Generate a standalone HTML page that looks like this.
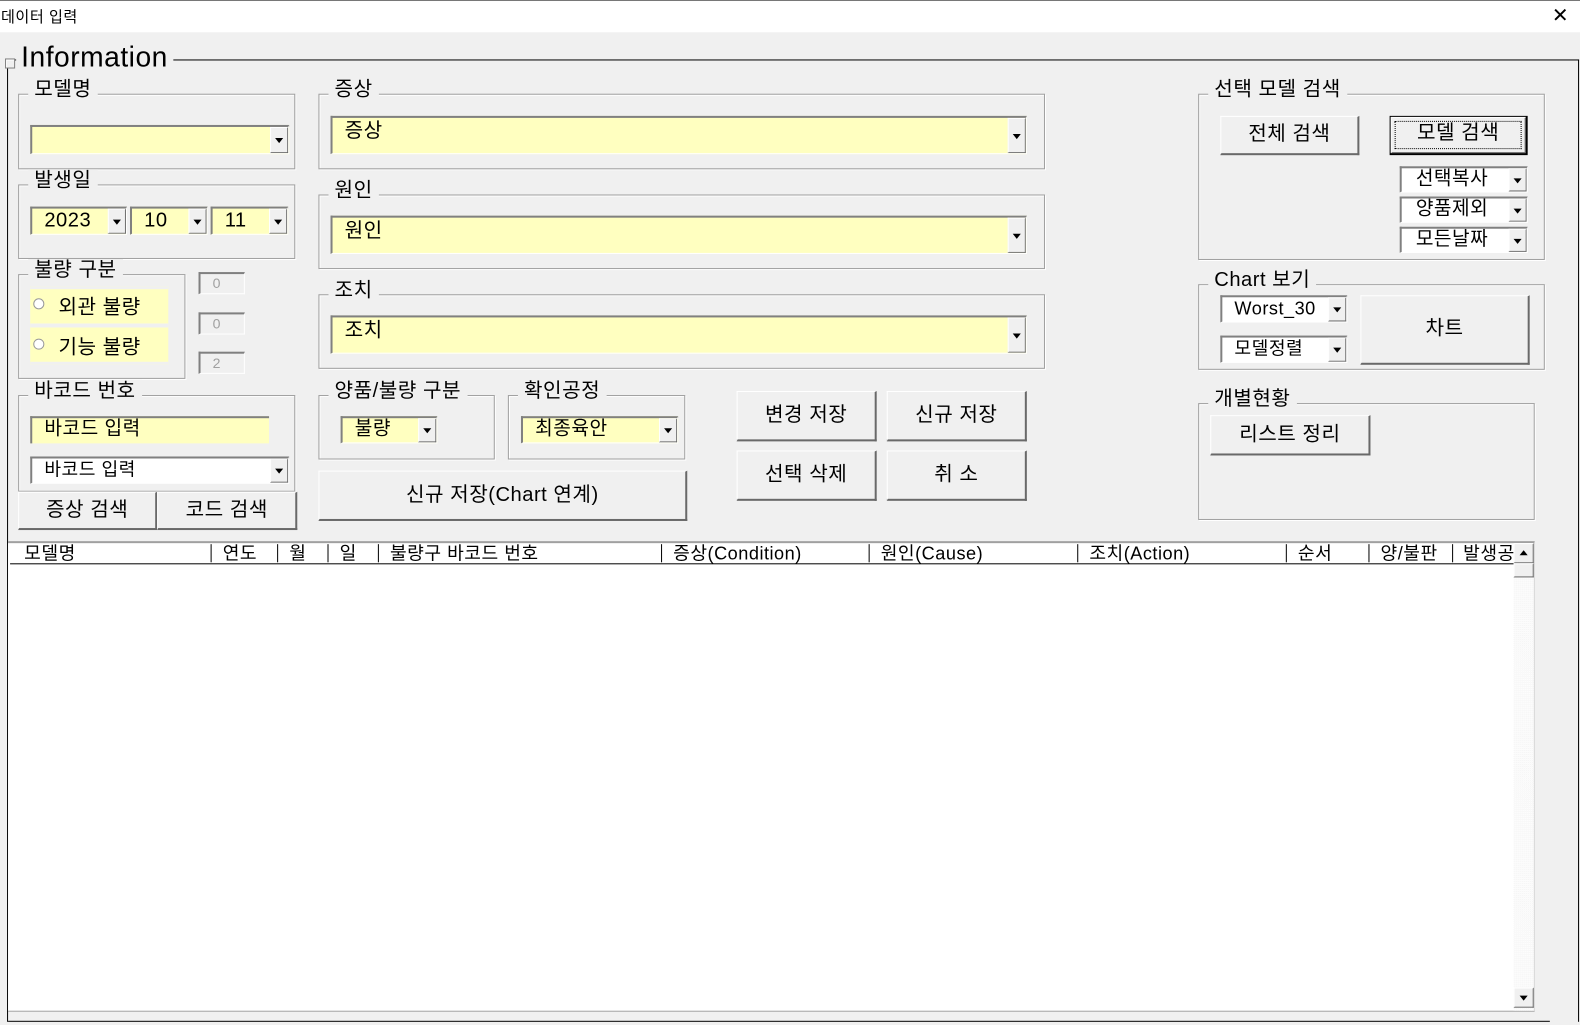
<!DOCTYPE html>
<html><head><meta charset="utf-8">
<style>
*{box-sizing:border-box;margin:0;padding:0}
html,body{width:1580px;height:1025px;overflow:hidden;background:#f0f0f0}
#wrap{width:1568px;height:1018px;background:#f0f0f0;position:relative;transform:scale(1.0077);transform-origin:0 0;font-family:"Liberation Sans","Noto Sans CJK KR",sans-serif;color:#000;letter-spacing:0.5px}
.a{position:absolute}
.title{left:0;top:0;width:1568px;height:32px;background:#fff;border-top:1px solid #777;font-size:15px;padding:5px 0 0 1px}
.fr{position:absolute;border:1px solid #a0a0a0;box-shadow:1px 1px 0 #fff inset,1px 1px 0 #fff}
.lg{position:absolute;background:#f0f0f0;font-size:20px;line-height:22px;padding:0 6px;white-space:nowrap}
.cb{position:absolute;border-top:2px solid #808080;border-left:2px solid #808080;border-right:1px solid #fff;border-bottom:1px solid #fff;background:#ffffc0;font-size:19px;padding-left:12px;white-space:nowrap;overflow:hidden}
.cb.w{background:#fff}
.cb .dd{position:absolute;right:0;top:0;bottom:0;width:18px;background:#f0f0f0;border-top:1px solid #fff;border-left:1px solid #fff;border-right:1px solid #696969;border-bottom:1px solid #696969}
.cb .dd:after{content:"";position:absolute;left:4px;top:50%;margin-top:-2px;border-left:4px solid transparent;border-right:4px solid transparent;border-top:5px solid #000}
.bt{position:absolute;background:#f0f0f0;border-top:1px solid #fff;border-left:1px solid #fff;border-right:2px solid #696969;border-bottom:2px solid #696969;font-size:20px;text-align:center;white-space:nowrap}
.tb{position:absolute;width:46px;height:22px;border-top:2px solid #808080;border-left:2px solid #808080;border-right:1px solid #fff;border-bottom:1px solid #fff;font-size:14px;color:#a0a0a0;padding-left:12px;line-height:18px}
.hd{position:absolute;top:538px;font-size:18px;line-height:22px;color:#000;white-space:nowrap}
.sep{position:absolute;top:540px;width:1px;height:18px;background:#000}
</style></head><body><div id="wrap">
<div class="a title">데이터 입력</div>
<div class="a" style="left:1540px;top:6px;font-size:20px;line-height:20px;font-weight:300">✕</div>

<div class="a" style="left:7px;top:59px;width:1560px;height:955px;border:1px solid #000;border-bottom:none"></div>
<div class="a" style="left:8px;top:1013px;width:1530px;height:1px;background:#000"></div>
<div class="a" style="left:5px;top:58px;width:10px;height:10px;border:1px solid #808080;background:#f0f0f0;box-shadow:1px 1px 0 #fff inset"></div>
<div class="lg" style="left:16px;top:42px;font-size:28px;line-height:30px;padding:0 5px">Information</div>

<div class="fr" style="left:18px;top:93px;width:275px;height:75px"></div>
<div class="lg" style="left:28px;top:78px">모델명</div>
<div class="cb" style="left:30px;top:124px;width:257px;height:29px"><span class="dd"></span></div>

<div class="fr" style="left:18px;top:183px;width:275px;height:74px"></div>
<div class="lg" style="left:28px;top:168px">발생일</div>
<div class="cb" style="left:30px;top:205px;width:96px;height:28px;line-height:24px;font-size:20px">2023<span class="dd"></span></div>
<div class="cb" style="left:129px;top:205px;width:77px;height:28px;line-height:24px;font-size:20px">10<span class="dd"></span></div>
<div class="cb" style="left:209px;top:205px;width:77px;height:28px;line-height:24px;font-size:20px">11<span class="dd"></span></div>

<div class="fr" style="left:18px;top:272px;width:166px;height:104px"></div>
<div class="lg" style="left:28px;top:257px">불량 구분</div>
<div class="a" style="left:30px;top:284px;width:137px;height:78px;background:#ffffc0;border-top:3px solid #f0f0f0;border-bottom:3px solid #f0f0f0"></div>
<div class="a" style="left:30px;top:321px;width:137px;height:4px;background:#f0f0f0"></div>
<div class="a" style="left:33px;top:296px;width:11px;height:11px;border-radius:50%;background:#fff;border:1px solid #999"></div>
<div class="a" style="left:33px;top:336px;width:11px;height:11px;border-radius:50%;background:#fff;border:1px solid #999"></div>
<div class="a" style="left:58px;top:288px;font-size:20px">외관 불량</div>
<div class="a" style="left:58px;top:328px;font-size:20px">기능 불량</div>
<div class="tb" style="left:197px;top:270px">0</div>
<div class="tb" style="left:197px;top:310px">0</div>
<div class="tb" style="left:197px;top:349px">2</div>

<div class="fr" style="left:18px;top:392px;width:275px;height:96px"></div>
<div class="lg" style="left:28px;top:377px">바코드 번호</div>
<div class="cb" style="left:30px;top:413px;width:237px;height:27px;line-height:22px;border-right:none;border-bottom:none">바코드 입력</div>
<div class="cb w" style="left:30px;top:453px;width:257px;height:27px;line-height:22px;font-size:18px">바코드 입력<span class="dd"></span></div>
<div class="bt" style="left:18px;top:488px;width:138px;height:38px;line-height:34px">증상 검색</div>
<div class="bt" style="left:156px;top:488px;width:139px;height:38px;line-height:34px">코드 검색</div>

<div class="fr" style="left:316px;top:93px;width:721px;height:75px"></div>
<div class="lg" style="left:326px;top:78px">증상</div>
<div class="cb" style="left:328px;top:115px;width:691px;height:38px;line-height:26px;font-size:20px">증상<span class="dd"></span></div>
<div class="fr" style="left:316px;top:193px;width:721px;height:74px"></div>
<div class="lg" style="left:326px;top:178px">원인</div>
<div class="cb" style="left:328px;top:214px;width:691px;height:38px;line-height:26px;font-size:20px">원인<span class="dd"></span></div>
<div class="fr" style="left:316px;top:292px;width:721px;height:74px"></div>
<div class="lg" style="left:326px;top:277px">조치</div>
<div class="cb" style="left:328px;top:313px;width:691px;height:38px;line-height:26px;font-size:20px">조치<span class="dd"></span></div>

<div class="fr" style="left:316px;top:392px;width:175px;height:64px"></div>
<div class="lg" style="left:326px;top:377px">양품/불량 구분</div>
<div class="cb" style="left:338px;top:413px;width:96px;height:27px;line-height:22px">불량<span class="dd"></span></div>
<div class="fr" style="left:504px;top:392px;width:176px;height:64px"></div>
<div class="lg" style="left:514px;top:377px">확인공정</div>
<div class="cb" style="left:517px;top:413px;width:156px;height:27px;line-height:22px">최종육안<span class="dd"></span></div>
<div class="bt" style="left:316px;top:467px;width:366px;height:50px;line-height:46px">신규 저장(Chart 연계)</div>

<div class="bt" style="left:731px;top:388px;width:139px;height:50px;line-height:46px">변경 저장</div>
<div class="bt" style="left:880px;top:388px;width:139px;height:50px;line-height:46px">신규 저장</div>
<div class="bt" style="left:731px;top:447px;width:139px;height:50px;line-height:46px">선택 삭제</div>
<div class="bt" style="left:880px;top:447px;width:139px;height:50px;line-height:46px">취 소</div>

<div class="fr" style="left:1189px;top:93px;width:344px;height:165px"></div>
<div class="lg" style="left:1199px;top:78px">선택 모델 검색</div>
<div class="bt" style="left:1211px;top:115px;width:138px;height:39px;line-height:35px">전체 검색</div>
<div class="bt" style="left:1379px;top:115px;width:137px;height:39px;line-height:33px;border:1px solid #000;border-right:2px solid #000;border-bottom:2px solid #000;box-shadow:inset 1px 1px 0 #fff,inset -1px -1px 0 #696969"><div style="position:absolute;left:4px;top:4px;right:4px;bottom:4px;border:1px dotted #000"></div>모델 검색</div>
<div class="cb w" style="left:1389px;top:165px;width:127px;height:26px;line-height:21px;font-size:19px;padding-left:14px">선택복사<span class="dd"></span></div>
<div class="cb w" style="left:1389px;top:195px;width:127px;height:26px;line-height:21px;font-size:19px;padding-left:14px">양품제외<span class="dd"></span></div>
<div class="cb w" style="left:1389px;top:225px;width:127px;height:26px;line-height:21px;font-size:19px;padding-left:14px">모든날짜<span class="dd"></span></div>

<div class="fr" style="left:1189px;top:282px;width:344px;height:85px"></div>
<div class="lg" style="left:1199px;top:267px">Chart 보기</div>
<div class="cb w" style="left:1211px;top:293px;width:126px;height:27px;line-height:22px;font-size:18px">Worst_30<span class="dd"></span></div>
<div class="cb w" style="left:1211px;top:333px;width:126px;height:27px;line-height:22px;font-size:18px">모델정렬<span class="dd"></span></div>
<div class="bt" style="left:1350px;top:293px;width:168px;height:69px;line-height:64px">차트</div>

<div class="fr" style="left:1189px;top:400px;width:334px;height:116px"></div>
<div class="lg" style="left:1199px;top:385px">개별현황</div>
<div class="bt" style="left:1201px;top:412px;width:159px;height:40px;line-height:36px">리스트 정리</div>

<div class="a" style="left:8px;top:537px;width:1515px;height:467px;background:#fff;border-top:2px solid #a0a0a0;border-bottom:1px solid #a0a0a0;border-right:1px solid #d0d0d0"></div>
<div class="a" style="left:10px;top:559px;width:1492px;height:1px;background:#000"></div>
<div class="hd" style="left:24px">모델명</div>
<div class="sep" style="left:209px"></div><div class="hd" style="left:221px">연도</div>
<div class="sep" style="left:275px"></div><div class="hd" style="left:287px">월</div>
<div class="sep" style="left:325px"></div><div class="hd" style="left:337px">일</div>
<div class="sep" style="left:375px"></div><div class="hd" style="left:387px">불량구 바코드 번호</div>
<div class="sep" style="left:656px"></div><div class="hd" style="left:668px">증상(Condition)</div>
<div class="sep" style="left:862px"></div><div class="hd" style="left:874px">원인(Cause)</div>
<div class="sep" style="left:1069px"></div><div class="hd" style="left:1081px">조치(Action)</div>
<div class="sep" style="left:1276px"></div><div class="hd" style="left:1288px">순서</div>
<div class="sep" style="left:1358px"></div><div class="hd" style="left:1370px">양/불판</div>
<div class="sep" style="left:1441px"></div><div class="hd" style="left:1452px;width:50px;overflow:hidden">발생공정</div>
<div class="a" style="left:1502px;top:539px;width:20px;height:464px;background:repeating-conic-gradient(#f4f4f4 0 25%,#fff 0 50%) 0 0/2px 2px"></div>
<div class="bt" style="left:1502px;top:539px;width:20px;height:20px;border-right-width:1px;border-bottom-width:1px"><div style="position:absolute;left:5px;top:6px;border-left:4px solid transparent;border-right:4px solid transparent;border-bottom:5px solid #000"></div></div>
<div class="bt" style="left:1502px;top:559px;width:20px;height:14px;border-right-width:1px;border-bottom-width:1px"></div>
<div class="bt" style="left:1502px;top:980px;width:20px;height:20px;border-right-width:1px;border-bottom-width:1px"><div style="position:absolute;left:5px;top:7px;border-left:4px solid transparent;border-right:4px solid transparent;border-top:5px solid #000"></div></div>
</div></body></html>
